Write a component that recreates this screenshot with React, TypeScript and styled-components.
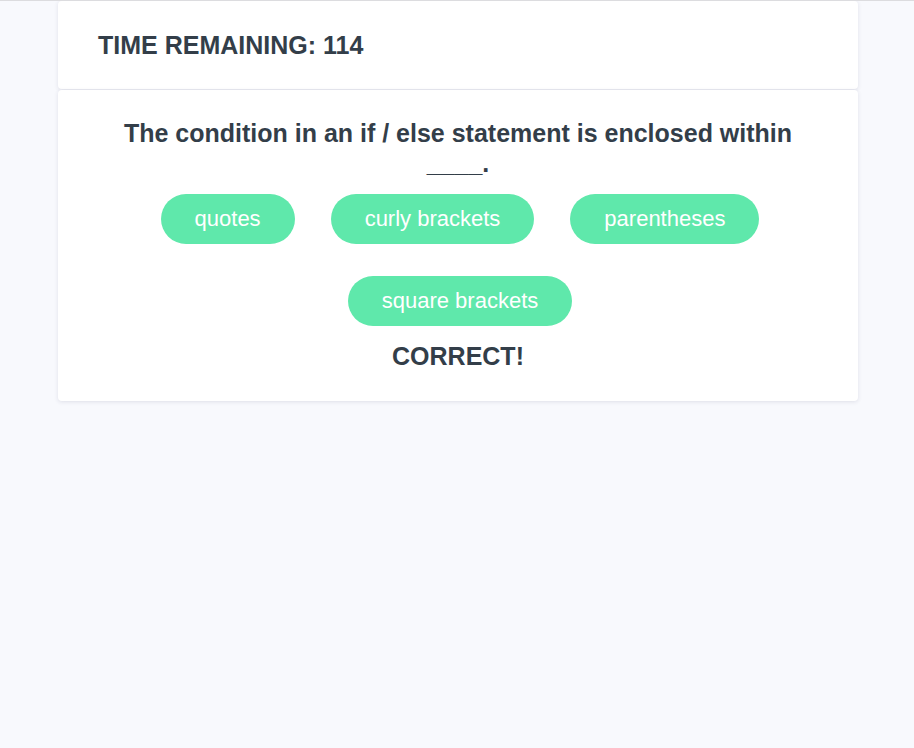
import React from "react";
import styled, { createGlobalStyle } from "styled-components";

const Global = createGlobalStyle`
  html, body { margin: 0; padding: 0; }
  body {
    background: #f8f9fd;
    font-family: "Liberation Sans", Arial, Helvetica, sans-serif;
    color: #333e49;
    border-top: 1px solid #dcdcdf;
    padding-left: 2px;
    min-height: 747px;
  }
`;

const Page = styled.main`
  width: 800px;
  margin: 0 auto;
  display: flex;
  flex-direction: column;
  gap: 1px;
`;

const Card = styled.section<{ $pad: string }>`
  background: #ffffff;
  border-radius: 4px;
  box-shadow: 0 1px 4px rgba(40, 45, 80, 0.12);
  padding: ${(p) => p.$pad};
`;

const Timer = styled.h2`
  margin: 0;
  font-size: 25px;
  font-weight: 700;
  line-height: 28px;
`;

const Question = styled.h1`
  margin: 0 auto;
  max-width: 700px;
  text-align: center;
  font-size: 25px;
  font-weight: 700;
  line-height: 30px;
`;

const Choices = styled.div`
  display: flex;
  flex-wrap: wrap;
  justify-content: center;
  column-gap: 36px;
  row-gap: 32px;
  padding: 0 50px 0 54px;
  margin-top: 16px;
`;

const Choice = styled.button`
  height: 50px;
  padding: 0 34px;
  border: none;
  border-radius: 25px;
  background: #5fe8ab;
  color: #ffffff;
  font-family: inherit;
  font-size: 22px;
  cursor: pointer;
`;

const Result = styled.p`
  margin: 16px 0 0;
  text-align: center;
  font-size: 25px;
  font-weight: 700;
  line-height: 28px;
`;

const choices = ["quotes", "curly brackets", "parentheses", "square brackets"];

export default function App() {
  return (
    <>
      <Global />
      <Page>
        <Card $pad="30px 40px 30px">
          <Timer>TIME REMAINING: 114</Timer>
        </Card>
        <Card $pad="28px 40px 31px">
          <Question>The condition in an if / else statement is enclosed within ____.</Question>
          <Choices>
            {choices.map((c) => (
              <Choice key={c}>{c}</Choice>
            ))}
          </Choices>
          <Result>CORRECT!</Result>
        </Card>
      </Page>
    </>
  );
}
